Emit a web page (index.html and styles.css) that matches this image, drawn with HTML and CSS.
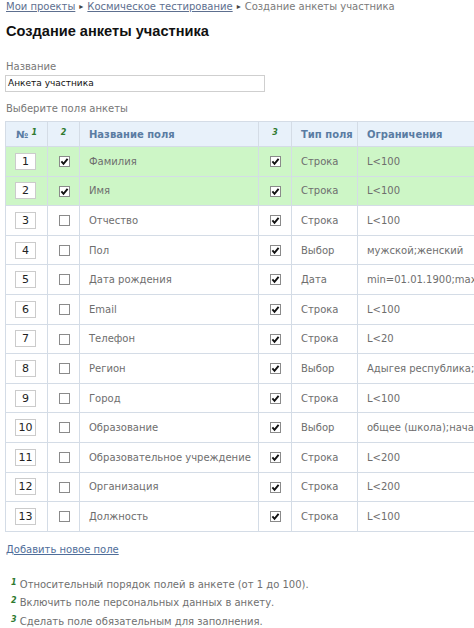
FILE: index.html
```html
<!DOCTYPE html>
<html lang="ru">
<head>
<meta charset="utf-8">
<link rel="stylesheet" href="styles.css">
</head>
<body>
<div class="page">
  <div class="crumbs">
    <a href="#">Мои проекты</a><span class="sep">&#9656;</span><a href="#">Космическое тестирование</a><span class="sep">&#9656;</span><span>Создание анкеты участника</span>
  </div>
  <h1 class="title">Создание анкеты участника</h1>
  <div class="label">Название</div>
  <div class="input">Анкета участника</div>
  <div class="label label2">Выберите поля анкеты</div>
  <div class="wrap">
    <table class="grid">
      <colgroup>
        <col class="c1"><col class="c2"><col class="c3"><col class="c4"><col class="c5"><col class="c6">
      </colgroup>
      <thead>
        <tr>
          <th class="ctr">№ <sup class="fn">1</sup></th>
          <th class="ctr"><sup class="fn">2</sup></th>
          <th>Название поля</th>
          <th class="ctr"><sup class="fn">3</sup></th>
          <th>Тип поля</th>
          <th>Ограничения</th>
        </tr>
      </thead>
      <tbody id="rows"></tbody>
    </table>
  </div>
  <a class="add" href="#">Добавить новое поле</a>
  <div class="notes">
    <div class="note"><sup class="fn">1</sup> Относительный порядок полей в анкете (от 1 до 100).</div>
    <div class="note"><sup class="fn">2</sup> Включить поле персональных данных в анкету.</div>
    <div class="note"><sup class="fn">3</sup> Сделать поле обязательным для заполнения.</div>
  </div>
</div>
<script>
var data = [
  ["Фамилия",1,1,"Строка","L<100"],
  ["Имя",1,1,"Строка","L<100"],
  ["Отчество",0,1,"Строка","L<100"],
  ["Пол",0,1,"Выбор","мужской;женский"],
  ["Дата рождения",0,1,"Дата","min=01.01.1900;max=31.12.2010"],
  ["Email",0,1,"Строка","L<100"],
  ["Телефон",0,1,"Строка","L<20"],
  ["Регион",0,1,"Выбор","Адыгея республика;Алтай"],
  ["Город",0,1,"Строка","L<100"],
  ["Образование",0,1,"Выбор","общее (школа);начальное"],
  ["Образовательное учреждение",0,1,"Строка","L<200"],
  ["Организация",0,1,"Строка","L<200"],
  ["Должность",0,1,"Строка","L<100"]
];
var on = '<svg class="cb" width="11" height="11" viewBox="0 0 11 11"><rect x="0.5" y="0.5" width="10" height="10" fill="#fff" stroke="#8a8a8a"/><path d="M2.4 5.4 L4.5 7.8 L8.6 2.8" fill="none" stroke="#111" stroke-width="1.9"/></svg>';
var off = '<svg class="cb" width="11" height="11" viewBox="0 0 11 11"><rect x="0.5" y="0.5" width="10" height="10" fill="#fff" stroke="#8a8a8a"/></svg>';
var html = "";
data.forEach(function(r, i){
  var esc = function(s){return s.replace(/&/g,"&amp;").replace(/</g,"&lt;");};
  html += '<tr class="' + (r[1] ? 'sel' : '') + '">' +
    '<td class="ctr"><span class="num">' + (i+1) + '</span></td>' +
    '<td class="ctr">' + (r[1] ? on : off) + '</td>' +
    '<td>' + esc(r[0]) + '</td>' +
    '<td class="ctr">' + (r[2] ? on : off) + '</td>' +
    '<td>' + esc(r[3]) + '</td>' +
    '<td>' + esc(r[4]) + '</td></tr>';
});
document.getElementById("rows").innerHTML = html;
</script>
</body>
</html>
```

FILE: styles.css
```css
html, body {
  margin: 0;
  padding: 0;
  background: #fff;
  overflow-x: hidden;
}
.page {
  padding: 0 0 0 5px;
  font-family: "DejaVu Sans", Verdana, sans-serif;
  font-size: 10px;
  color: #6e6e6e;
}
.crumbs {
  line-height: 13px;
  padding-left: 1px;
  white-space: nowrap;
  color: #7a7a7a;
}
.crumbs a {
  color: #5d6f8f;
  text-decoration: underline;
}
.crumbs .sep {
  font-size: 8px;
  color: #444;
  margin: 0 4px;
  position: relative;
  top: -1px;
}
.title {
  font-family: "Liberation Sans", Arial, sans-serif;
  font-weight: bold;
  font-size: 14.6px;
  line-height: 18px;
  color: #111;
  margin: 8px 0 0 1px;
}
.label {
  margin-top: 20px;
  line-height: 13px;
  padding-left: 1px;
  color: #777;
}
.input {
  margin-top: 2px;
  width: 254px;
  height: 15px;
  line-height: 15px;
  border: 1px solid #cfcfcf;
  padding: 0 2px;
  font-size: 9px;
  color: #111;
}
.label2 {
  margin-top: 10px;
}
.wrap {
  margin-top: 6px;
  overflow: hidden;
}
.grid {
  border-collapse: collapse;
  table-layout: fixed;
  width: 560px;
  border: 1px solid #d4dce6;
}
.c1 { width: 42px; }
.c2 { width: 32px; }
.c3 { width: 179px; }
.c4 { width: 33px; }
.c5 { width: 66px; }
.c6 { width: 208px; }
.grid th, .grid td {
  border: 1px solid #d4dce6;
  padding: 0 0 0 9px;
  text-align: left;
  white-space: nowrap;
  overflow: hidden;
  vertical-align: middle;
}
.grid th {
  height: 24px;
  background: #e8f1fa;
  color: #5a7ca3;
  font-weight: bold;
}
.grid td {
  height: 28.6px;
}
.grid .ctr {
  text-align: center;
  padding: 0;
}
.grid tr.sel td {
  background: #cdf6c6;
}
.num {
  display: inline-block;
  width: 19px;
  height: 15px;
  line-height: 15px;
  border: 1px solid #cbcbcb;
  background: #fff;
  color: #222;
  font-size: 11px;
  text-align: center;
  vertical-align: middle;
  margin-right: 2px;
}
.cb {
  display: inline-block;
  vertical-align: middle;
  margin-left: 1px;
}
.fn {
  font-family: "DejaVu Sans", sans-serif;
  font-size: 8px;
  font-weight: bold;
  font-style: italic;
  color: #2f7a2f;
  vertical-align: 3px;
  line-height: 0;
}
.add {
  display: block;
  width: max-content;
  margin: 11px 0 0 1px;
  line-height: 13px;
  color: #4f6e9a;
  text-decoration: underline;
}
.notes {
  margin-top: 20px;
  padding-left: 6px;
}
.note {
  line-height: 18.5px;
  color: #707070;
}
```
